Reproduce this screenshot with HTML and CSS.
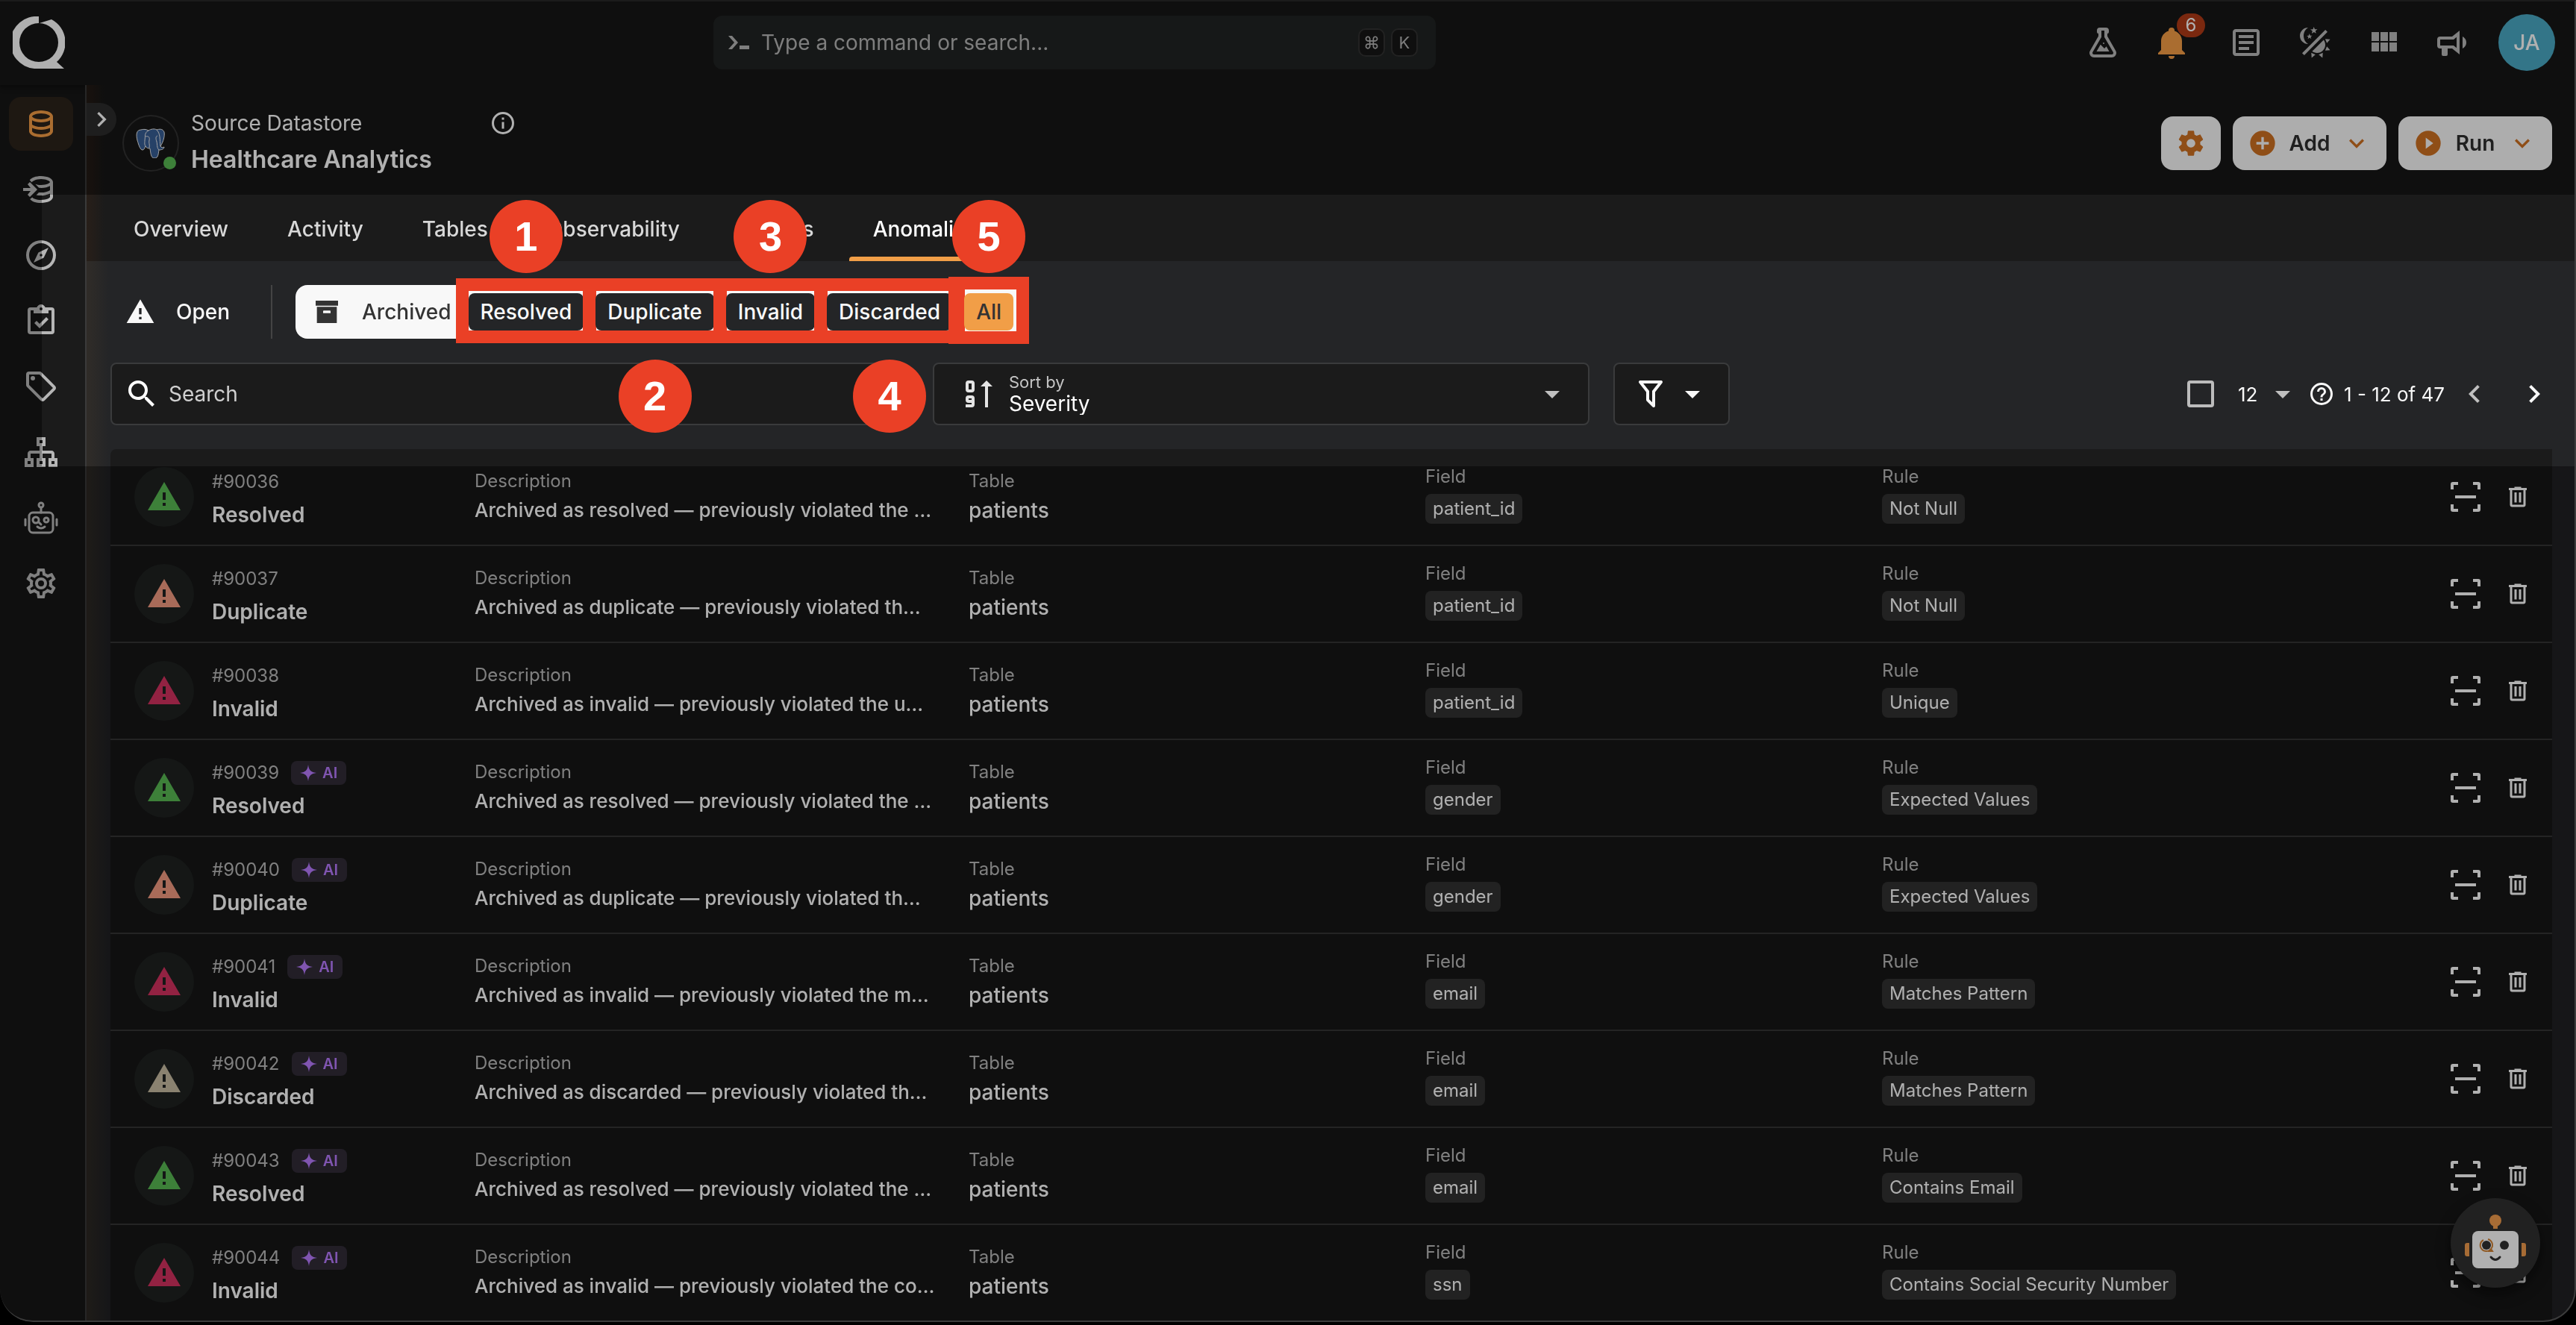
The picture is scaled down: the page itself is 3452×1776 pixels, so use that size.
FILE: index.html
```html
<!DOCTYPE html>
<html lang="en">
<head>
    <meta charset="UTF-8">
    <meta name="viewport" content="width=device-width, initial-scale=1.0">
    <title>Healthcare Analytics - Anomalies</title>
    <link rel="stylesheet" href="styles.css">
</head>
<body>
    <svg class="sprite" aria-hidden="true">
        <symbol id="i-database" viewBox="0 0 24 24"><path d="M12 3C7.58 3 4 4.79 4 7V17C4 19.21 7.59 21 12 21S20 19.21 20 17V7C20 4.79 16.42 3 12 3M18 17C18 17.5 15.87 19 12 19S6 17.5 6 17V14.77C7.61 15.55 9.72 16 12 16S16.39 15.55 18 14.77V17M18 12.45C16.7 13.4 14.42 14 12 14C9.58 14 7.3 13.4 6 12.45V9.64C7.47 10.47 9.61 11 12 11C14.39 11 16.53 10.47 18 9.64V12.45M12 9C8.13 9 6 7.5 6 7S8.13 5 12 5C15.87 5 18 6.5 18 7S15.87 9 12 9Z"/></symbol>
        <symbol id="i-enrich" viewBox="0 0 24 24">
            <path d="M0 11H5L3 8.500L4.500 7L9.500 12L4.500 17L3 15.500L5 13H0Z"/>
            <path d="M12 3C8.500 3 5.500 4.100 4.400 5.700L5.900 7.200C6.100 6.500 8.300 5 12 5C15.870 5 18 6.500 18 7S15.870 9 12 9C10.500 9 9.200 8.800 8.200 8.400L10.600 10.900C13.600 11.200 16.300 10.600 18 9.640V12.450C16.700 13.400 14.420 14 12 14H10.500L8.800 15.700C9.800 15.900 10.900 16 12 16C14.280 16 16.390 15.550 18 14.770V17C18 17.500 15.870 19 12 19C8.700 19 6.600 17.900 6.100 17.200L4.600 18.500C5.800 20 8.600 21 12 21C16.410 21 20 19.210 20 17V7C20 4.790 16.420 3 12 3Z"/>
        </symbol>
        <symbol id="i-compass" viewBox="0 0 24 24"><path d="M7,17L10.2,10.2L17,7L13.8,13.8L7,17M12,11.1A0.9,0.9 0 0,0 11.1,12A0.9,0.9 0 0,0 12,12.9A0.9,0.9 0 0,0 12.9,12A0.9,0.9 0 0,0 12,11.1M12,2A10,10 0 0,1 22,12A10,10 0 0,1 12,22A10,10 0 0,1 2,12A10,10 0 0,1 12,2M12,4A8,8 0 0,0 4,12A8,8 0 0,0 12,20A8,8 0 0,0 20,12A8,8 0 0,0 12,4Z"/></symbol>
        <symbol id="i-clipboard" viewBox="0 0 24 24"><path d="M19,3H14.82C14.4,1.84 13.3,1 12,1C10.7,1 9.6,1.84 9.18,3H5A2,2 0 0,0 3,5V19A2,2 0 0,0 5,21H19A2,2 0 0,0 21,19V5A2,2 0 0,0 19,3M12,3A1,1 0 0,1 13,4A1,1 0 0,1 12,5A1,1 0 0,1 11,4A1,1 0 0,1 12,3M7,7H17V5H19V19H5V5H7V7M7.5,13.5L9,12L11,14L15.5,9.5L17,11L11,17L7.5,13.5Z"/></symbol>
        <symbol id="i-tag" viewBox="0 0 24 24"><path d="M21.41 11.58L12.41 2.58A2 2 0 0 0 11 2H4A2 2 0 0 0 2 4V11A2 2 0 0 0 2.59 12.42L11.59 21.42A2 2 0 0 0 13 22A2 2 0 0 0 14.41 21.41L21.41 14.41A2 2 0 0 0 22 13A2 2 0 0 0 21.41 11.58M13 20L4 11V4H11L20 13M6.5 5A1.5 1.5 0 1 1 5 6.5A1.5 1.5 0 0 1 6.5 5Z"/></symbol>
        <symbol id="i-sitemap" viewBox="0 0 24 24"><path d="M9 2V8H11V11H5C3.89 11 3 11.89 3 13V16H1V22H7V16H5V13H11V16H9V22H15V16H13V13H19V16H17V22H23V16H21V13C21 11.89 20.11 11 19 11H13V8H15V2H9M11 4H13V6H11V4M3 18H5V20H3V18M11 18H13V20H11V18M19 18H21V20H19V18Z"/></symbol>
        <symbol id="i-robot" viewBox="0 0 48 48">
            <g fill="none" stroke="currentColor" stroke-width="3" stroke-linecap="round">
                <rect x="8" y="17" width="32" height="27" rx="5"/>
                <circle cx="24" cy="7" r="3"/>
                <path d="M24 11V17M19 36Q24 40 29 36M21 30L24 33"/>
                <circle cx="17" cy="27" r="4"/>
                <circle cx="31" cy="27" r="3"/>
                <path d="M3 26V34M45 26V34"/>
            </g>
        </symbol>
        <symbol id="i-cog-outline" viewBox="0 0 24 24"><path d="M12,8A4,4 0 0,1 16,12A4,4 0 0,1 12,16A4,4 0 0,1 8,12A4,4 0 0,1 12,8M12,10A2,2 0 0,0 10,12A2,2 0 0,0 12,14A2,2 0 0,0 14,12A2,2 0 0,0 12,10M10,22C9.75,22 9.54,21.82 9.5,21.58L9.13,18.93C8.5,18.68 7.96,18.34 7.44,17.94L4.95,18.95C4.73,19.03 4.46,18.95 4.34,18.73L2.34,15.27C2.21,15.05 2.27,14.78 2.46,14.63L4.57,12.97L4.5,12L4.57,11L2.46,9.37C2.27,9.22 2.21,8.95 2.34,8.73L4.34,5.27C4.46,5.05 4.73,4.96 4.95,5.05L7.44,6.05C7.96,5.66 8.5,5.32 9.13,5.07L9.5,2.42C9.54,2.18 9.75,2 10,2H14C14.25,2 14.46,2.18 14.5,2.42L14.87,5.07C15.5,5.32 16.04,5.66 16.56,6.05L19.05,5.05C19.27,4.96 19.54,5.05 19.66,5.27L21.66,8.73C21.79,8.95 21.73,9.22 21.54,9.37L19.43,11L19.5,12L19.43,13L21.54,14.63C21.73,14.78 21.79,15.05 21.66,15.27L19.66,18.73C19.54,18.95 19.27,19.04 19.05,18.95L16.56,17.95C16.04,18.34 15.5,18.68 14.87,18.93L14.5,21.58C14.46,21.82 14.25,22 14,22H10M11.25,4L10.88,6.61C9.68,6.86 8.62,7.5 7.85,8.39L5.44,7.35L4.69,8.65L6.8,10.2C6.4,11.37 6.4,12.64 6.8,13.8L4.68,15.36L5.43,16.66L7.86,15.62C8.63,16.5 9.68,17.14 10.87,17.38L11.24,20H12.76L13.13,17.39C14.32,17.14 15.37,16.5 16.14,15.62L18.57,16.66L19.32,15.36L17.2,13.81C17.6,12.64 17.6,11.37 17.2,10.2L19.31,8.65L18.56,7.35L16.15,8.39C15.38,7.5 14.32,6.86 13.12,6.62L12.75,4H11.25Z"/></symbol>
        <symbol id="i-cog" viewBox="0 0 24 24"><path d="M12,15.5A3.5,3.5 0 0,1 8.5,12A3.5,3.5 0 0,1 12,8.5A3.5,3.5 0 0,1 15.5,12A3.5,3.5 0 0,1 12,15.5M19.43,12.97C19.47,12.65 19.5,12.33 19.5,12C19.5,11.67 19.47,11.34 19.43,11L21.54,9.37C21.73,9.22 21.78,8.95 21.66,8.73L19.66,5.27C19.54,5.05 19.27,4.96 19.05,5.05L16.56,6.05C16.04,5.66 15.5,5.32 14.87,5.07L14.5,2.42C14.46,2.18 14.25,2 14,2H10C9.75,2 9.54,2.18 9.5,2.42L9.13,5.07C8.5,5.32 7.96,5.66 7.44,6.05L4.95,5.05C4.73,4.96 4.46,5.05 4.34,5.27L2.34,8.73C2.21,8.95 2.27,9.22 2.46,9.37L4.57,11C4.53,11.34 4.5,11.67 4.5,12C4.5,12.33 4.53,12.65 4.57,12.97L2.46,14.63C2.27,14.78 2.21,15.05 2.34,15.27L4.34,18.73C4.46,18.95 4.73,19.03 4.95,18.95L7.44,17.94C7.96,18.34 8.5,18.68 9.13,18.93L9.5,21.58C9.54,21.82 9.75,22 10,22H14C14.25,22 14.46,21.82 14.5,21.58L14.87,18.93C15.5,18.67 16.04,18.34 16.56,17.94L19.05,18.95C19.27,19.03 19.54,18.95 19.66,18.73L21.66,15.27C21.78,15.05 21.73,14.78 21.54,14.63L19.43,12.97Z"/></symbol>
        <symbol id="i-flask" viewBox="0 0 24 24"><path d="M5,19A1,1 0 0,0 6,20H18A1,1 0 0,0 19,19C19,18.79 18.93,18.59 18.82,18.43L13,8.35V4H11V8.35L5.18,18.43C5.07,18.59 5,18.79 5,19M6,22A3,3 0 0,1 3,19C3,18.4 3.18,17.84 3.5,17.37L9,7.81V6A1,1 0 0,1 8,5V4A2,2 0 0,1 10,2H14A2,2 0 0,1 16,4V5A1,1 0 0,1 15,6V7.81L20.5,17.37C20.82,17.84 21,18.4 21,19A3,3 0 0,1 18,22H6M13,16L14.34,14.66L16.27,18H7.73L10.39,13.39L13,16M12.5,12A0.5,0.5 0 0,1 13,12.5A0.5,0.5 0 0,1 12.5,13A0.5,0.5 0 0,1 12,12.5A0.5,0.5 0 0,1 12.5,12Z"/></symbol>
        <symbol id="i-bell" viewBox="0 0 24 24"><path d="M21,19V20H3V19L5,17V11C5,7.9 7.03,5.17 10,4.29C10,4.19 10,4.1 10,4A2,2 0 0,1 12,2A2,2 0 0,1 14,4C14,4.1 14,4.19 14,4.29C16.97,5.17 19,7.9 19,11V17L21,19M14,21A2,2 0 0,1 12,23A2,2 0 0,1 10,21"/></symbol>
        <symbol id="i-text-box" viewBox="0 0 24 24"><path d="M5,3C3.89,3 3,3.89 3,5V19C3,20.11 3.89,21 5,21H19C20.11,21 21,20.11 21,19V5C21,3.89 20.11,3 19,3H5M5,5H19V19H5V5M7,7V9H17V7H7M7,11V13H17V11H7M7,15V17H14V15H7Z"/></symbol>
        <symbol id="i-theme" viewBox="0 0 24 24"><path d="M7.5,2C5.71,3.15 4.5,5.18 4.5,7.5C4.5,9.82 5.71,11.85 7.53,13C4.46,13 2,10.54 2,7.5A5.5,5.5 0 0,1 7.5,2M19.07,3.5L20.5,4.93L4.93,20.5L3.5,19.07L19.07,3.5M12.89,5.93L11.41,5L9.97,6L10.39,4.3L9,3.24L10.75,3.12L11.33,1.47L12,3.1L13.73,3.13L12.38,4.26L12.89,5.93M9.59,9.54L8.43,8.81L7.31,9.59L7.65,8.27L6.56,7.44L7.92,7.35L8.37,6.06L8.88,7.33L10.24,7.36L9.19,8.23L9.59,9.54M19,13.5A5.5,5.5 0 0,1 13.5,19C12.28,19 11.15,18.6 10.24,17.93L17.93,10.24C18.6,11.15 19,12.28 19,13.5M14.6,20.08L17.37,18.93L17.13,22.28L14.6,20.08M18.93,17.38L20.08,14.61L22.28,17.15L18.93,17.38M20.08,12.42L18.94,9.64L22.28,9.88L20.08,12.42M9.63,18.93L12.4,20.08L9.87,22.27L9.63,18.93Z"/></symbol>
        <symbol id="i-grid" viewBox="0 0 24 24"><path d="M16,5V11H21V5M10,11H15V5H10M16,18H21V12H16M10,18H15V12H10M4,18H9V12H4M4,11H9V5H4V11Z"/></symbol>
        <symbol id="i-bullhorn" viewBox="0 0 24 24"><path d="M12,8H4A2,2 0 0,0 2,10V14A2,2 0 0,0 4,16H5V20A1,1 0 0,0 6,21H8A1,1 0 0,0 9,20V16H12L17,20V4L12,8M15,15.6L13,14H4V10H13L15,8.4V15.6M21.5,12C21.5,13.71 20.54,15.26 19,16V8C20.53,8.75 21.5,10.3 21.5,12Z"/></symbol>
        <symbol id="i-alert" viewBox="0 0 24 24"><path d="M13 14H11V9H13M13 18H11V16H13M1 21H23L12 2L1 21Z"/></symbol>
        <symbol id="i-archive" viewBox="0 0 24 24"><path d="M3 3H21V7H3V3M4 8H20V21H4V8M9.5 11A.5.5 0 0 0 9 11.5V13H15V11.5A.5.5 0 0 0 14.5 11H9.5Z"/></symbol>
        <symbol id="i-search" viewBox="0 0 24 24"><path d="M9.5,3A6.5,6.5 0 0,1 16,9.5C16,11.11 15.41,12.59 14.44,13.73L14.71,14H15.5L20.5,19L19,20.5L14,15.5V14.71L13.73,14.44C12.59,15.41 11.11,16 9.5,16A6.5,6.5 0 0,1 3,9.5A6.5,6.5 0 0,1 9.5,3M9.5,5C7,5 5,7 5,9.5C5,12 7,14 9.5,14C12,14 14,12 14,9.5C14,7 12,5 9.5,5Z"/></symbol>
        <symbol id="i-filter" viewBox="0 0 24 24"><path d="M15,19.88C15.04,20.18 14.94,20.5 14.71,20.71C14.32,21.1 13.69,21.1 13.3,20.71L9.29,16.7C9.06,16.47 8.96,16.16 9,15.87V10.75L4.21,4.62C3.87,4.19 3.95,3.56 4.38,3.22C4.57,3.08 4.78,3 5,3V3H19V3C19.22,3 19.43,3.08 19.62,3.22C20.05,3.56 20.13,4.19 19.79,4.62L15,10.75V19.88M7.04,5L11,10.06V15.58L13,17.58V10.05L16.96,5H7.04Z"/></symbol>
        <symbol id="i-sort" viewBox="0 0 24 24">
            <path d="M18 21V7H15L19 3L23 7H20V21Z"/>
            <g fill="none" stroke="currentColor" stroke-width="2">
                <rect x="6" y="4" width="4" height="6" rx="1"/>
                <path d="M10 17H7A1 1 0 0 1 6 16V15A1 1 0 0 1 7 14H9A1 1 0 0 1 10 15V19A1 1 0 0 1 9 20H5"/>
            </g>
        </symbol>
        <symbol id="i-help" viewBox="0 0 24 24"><path d="M11,18H13V16H11V18M12,2A10,10 0 0,0 2,12A10,10 0 0,0 12,22A10,10 0 0,0 22,12A10,10 0 0,0 12,2M12,20C7.59,20 4,16.41 4,12C4,7.59 7.59,4 12,4C16.41,4 20,7.59 20,12C20,16.41 16.41,20 12,20M12,6A4,4 0 0,0 8,10H10A2,2 0 0,1 12,8A2,2 0 0,1 14,10C14,12 11,11.75 11,15H13C13,12.75 16,12.5 16,10A4,4 0 0,0 12,6Z"/></symbol>
        <symbol id="i-info" viewBox="0 0 24 24"><path d="M11,9H13V7H11M12,20C7.59,20 4,16.41 4,12C4,7.59 7.59,4 12,4C16.41,4 20,7.59 20,12C20,16.41 16.41,20 12,20M12,2A10,10 0 0,0 2,12A10,10 0 0,0 12,22A10,10 0 0,0 22,12A10,10 0 0,0 12,2M11,17H13V11H11V17Z"/></symbol>
        <symbol id="i-trash" viewBox="0 0 24 24"><path d="M9,3V4H4V6H5V19A2,2 0 0,0 7,21H17A2,2 0 0,0 19,19V6H20V4H15V3H9M7,6H17V19H7V6M9,8V17H11V8H9M13,8V17H15V8H13Z"/></symbol>
        <symbol id="i-scan" viewBox="0 0 40 40"><path d="M0 10V3A3 3 0 0 1 3 0H10V4H4V10ZM30 0H37A3 3 0 0 1 40 3V10H36V4H30ZM40 30V37A3 3 0 0 1 37 40H30V36H36V30ZM10 40H3A3 3 0 0 1 0 37V30H4V36H10ZM6 18H34V22H6Z"/></symbol>
        <symbol id="i-plus" viewBox="0 0 24 24"><path d="M17,13H13V17H11V13H7V11H11V7H13V11H17M12,2A10,10 0 0,0 2,12A10,10 0 0,0 12,22A10,10 0 0,0 22,12A10,10 0 0,0 12,2Z"/></symbol>
        <symbol id="i-play" viewBox="0 0 24 24"><path d="M10,16.5V7.5L16,12M12,2A10,10 0 0,0 2,12A10,10 0 0,0 12,22A10,10 0 0,0 22,12A10,10 0 0,0 12,2Z"/></symbol>
        <symbol id="i-chevron-down" viewBox="0 0 24 24"><path d="M7.41,8.58L12,13.17L16.59,8.58L18,10L12,16L6,10L7.41,8.58Z"/></symbol>
        <symbol id="i-chevron-right" viewBox="0 0 24 24"><path d="M8.59,16.58L13.17,12L8.59,7.41L10,6L16,12L10,18L8.59,16.58Z"/></symbol>
        <symbol id="i-chevron-left" viewBox="0 0 24 24"><path d="M15.41,16.58L10.83,12L15.41,7.41L14,6L8,12L14,18L15.41,16.58Z"/></symbol>
        <symbol id="i-caret" viewBox="0 0 24 24"><path d="M7,10L12,15L17,10H7Z"/></symbol>
        <symbol id="i-prompt" viewBox="0 0 28 20"><path d="M0 1H5L13 10L5 19H0L8 10ZM15 14H28V19H15Z"/></symbol>
        <symbol id="i-spark" viewBox="0 0 24 24"><path d="M12 0C13 8 16 11 24 12C16 13 13 16 12 24C11 16 8 13 0 12C8 11 11 8 12 0Z"/></symbol>
    </svg>

    <div class="app">
        <header class="topbar">
            <a class="logo" href="#" aria-label="Home">
                <svg viewBox="0 0 70 70"><path fill-rule="evenodd" d="M35 0A35 35 0 0 0 29 70H69L59 61A35 35 0 0 0 52 4L36 9L35 9ZM35 9A26 26 0 0 1 35 61A26 26 0 0 1 35 9Z"/></svg>
            </a>
            <div class="command">
                <svg class="prompt"><use href="#i-prompt"/></svg>
                <input type="text" aria-label="Command" placeholder="Type a command or search...">
                <kbd>⌘</kbd>
                <kbd>K</kbd>
            </div>
            <nav class="top-actions" aria-label="Account">
                <button aria-label="Labs"><svg class="icon"><use href="#i-flask"/></svg></button>
                <button class="alerts" aria-label="Notifications"><svg class="icon"><use href="#i-bell"/></svg><span class="count">6</span></button>
                <button aria-label="Docs"><svg class="icon"><use href="#i-text-box"/></svg></button>
                <button aria-label="Theme"><svg class="icon"><use href="#i-theme"/></svg></button>
                <button aria-label="Apps"><svg class="icon"><use href="#i-grid"/></svg></button>
                <button aria-label="News"><svg class="icon"><use href="#i-bullhorn"/></svg></button>
            </nav>
            <button class="avatar">JA</button>
        </header>

        <div class="body">
            <nav class="sidebar" aria-label="Main">
                <a class="active" href="#" aria-label="Datastores"><svg class="icon"><use href="#i-database"/></svg></a>
                <a href="#" aria-label="Enrichment"><svg class="icon"><use href="#i-enrich"/></svg></a>
                <a href="#" aria-label="Explore"><svg class="icon"><use href="#i-compass"/></svg></a>
                <a href="#" aria-label="Checks"><svg class="icon"><use href="#i-clipboard"/></svg></a>
                <a href="#" aria-label="Tags"><svg class="icon"><use href="#i-tag"/></svg></a>
                <a href="#" aria-label="Flows"><svg class="icon"><use href="#i-sitemap"/></svg></a>
                <a href="#" aria-label="Assistant"><svg class="icon"><use href="#i-robot"/></svg></a>
                <a href="#" aria-label="Settings"><svg class="icon"><use href="#i-cog-outline"/></svg></a>
            </nav>

            <main class="main">
                <button class="expand" aria-label="Expand tree"><svg class="icon small"><use href="#i-chevron-right"/></svg></button>

                <section class="store">
                    <div class="store-icon">
                        <svg viewBox="0 0 40 40">
                            <path fill="#3b5f94" stroke="#e8e8e8" stroke-width="1" d="M7 2C1 2 0 8 2 16C4 23 6 29 9 29C11 29 12 26 13 24C14 26 16 27 19 27C20 33 20 40 25 40C30 40 30 35 31 29C34 29 38 28 38 25C36 26 34 26 33 24C37 18 39 10 38 5C36 0 31 1 28 2C25 0 20 1 17 3C14 1 10 1 7 2Z"/>
                            <path fill="none" stroke="#e8e8e8" stroke-width="1" d="M17 3C11 6 13 11 12 16C12 20 11 22 14 25M28 2C33 7 32 15 33 24M13 11C17 10 19 12 18 16C17 19 19 22 18 26M29 10C26 11 27 15 28 18C29 22 28 26 31 29"/>
                        </svg>
                        <span class="online"></span>
                    </div>
                    <div class="store-text">
                        <div class="store-kind">Source Datastore <svg class="icon mini"><use href="#i-info"/></svg></div>
                        <h1>Healthcare Analytics</h1>
                    </div>
                    <div class="store-actions">
                        <button class="btn" aria-label="Settings"><svg class="icon small"><use href="#i-cog"/></svg></button>
                        <button class="btn wide"><svg class="icon small"><use href="#i-plus"/></svg>Add<svg class="icon small"><use href="#i-chevron-down"/></svg></button>
                        <button class="btn wide"><svg class="icon small"><use href="#i-play"/></svg>Run<svg class="icon small"><use href="#i-chevron-down"/></svg></button>
                    </div>
                </section>

                <nav class="tabs" aria-label="Datastore">
                    <a href="#">Overview</a>
                    <a href="#">Activity</a>
                    <a href="#">Tables</a>
                    <a href="#">Observability</a>
                    <a href="#">Checks</a>
                    <a class="active" href="#">Anomalies</a>
                </nav>

                <section class="content">
                    <div class="status-bar">
                        <button class="open"><svg class="icon small"><use href="#i-alert"/></svg>Open</button>
                        <div class="archived">
                            <svg class="icon small"><use href="#i-archive"/></svg>
                            <span class="archived-label">Archived</span>
                            <div class="step"><button class="chip">Resolved</button><span class="num">1</span></div>
                            <div class="step"><button class="chip">Duplicate</button><span class="num below">2</span></div>
                            <div class="step"><button class="chip">Invalid</button><span class="num">3</span></div>
                            <div class="step"><button class="chip">Discarded</button><span class="num below">4</span></div>
                            <div class="step last"><button class="chip selected">All</button><span class="num">5</span></div>
                        </div>
                    </div>

                    <div class="filters">
                        <div class="box search">
                            <svg class="icon"><use href="#i-search"/></svg>
                            <input type="text" aria-label="Search anomalies" placeholder="Search">
                        </div>
                        <div class="box sort">
                            <svg class="icon"><use href="#i-sort"/></svg>
                            <div class="sort-field">
                                <label for="sortBy">Sort by</label>
                                <select id="sortBy">
                                    <option>Severity</option>
                                    <option>Created</option>
                                </select>
                            </div>
                            <svg class="icon caret"><use href="#i-caret"/></svg>
                        </div>
                        <button class="box filter" aria-label="Filter"><svg class="icon"><use href="#i-filter"/></svg><svg class="icon"><use href="#i-caret"/></svg></button>
                        <div class="pager">
                            <input type="checkbox" aria-label="Select all">
                            <select aria-label="Rows per page">
                                <option>12</option>
                                <option>24</option>
                            </select>
                            <svg class="icon caret"><use href="#i-caret"/></svg>
                            <svg class="icon mini"><use href="#i-help"/></svg>
                            <span class="range">1 - 12 of 47</span>
                            <button class="prev" aria-label="Previous page"><svg class="icon"><use href="#i-chevron-left"/></svg></button>
                            <button aria-label="Next page"><svg class="icon"><use href="#i-chevron-right"/></svg></button>
                        </div>
                    </div>

                    <table class="anomalies">
                        <colgroup>
                            <col class="c-id">
                            <col class="c-desc">
                            <col class="c-attr">
                            <col class="c-attr">
                            <col class="c-attr">
                            <col>
                        </colgroup>
                        <tbody id="anomalyList"></tbody>
                    </table>
                </section>
            </main>
        </div>

        <button class="assistant" aria-label="Open assistant">
            <svg viewBox="0 0 84 74">
                <g fill="#ec9a4f">
                    <circle cx="42" cy="9" r="8"/>
                    <path d="M39 14H45V20H39Z"/>
                    <path d="M7 39H4A3 3 0 0 0 1 42V54A3 3 0 0 0 4 57H7ZM77 39H80A3 3 0 0 1 83 42V54A3 3 0 0 1 80 57H77Z"/>
                </g>
                <rect x="11" y="23" width="62" height="50" rx="8" fill="#fafafa"/>
                <path fill="none" stroke="#cb7f36" stroke-width="2" d="M26 35A8 8 0 1 0 36 47L38 50H32M32 34A8 8 0 0 1 36 47"/>
                <circle cx="30" cy="42" r="6" fill="#343434"/>
                <circle cx="54" cy="42" r="6" fill="#343434"/>
                <path fill="none" stroke="#343434" stroke-width="3" stroke-linecap="round" d="M36 58Q42 65 48 58"/>
            </svg>
        </button>

        <div class="dim dim-top"></div>
        <div class="dim dim-left"></div>
        <div class="dim dim-bottom"></div>
    </div>

    <script>
        const anomalies = [
            { id: 90036, status: 'Resolved', desc: 'Archived as resolved — previously violated the …', field: 'patient_id', rule: 'Not Null' },
            { id: 90037, status: 'Duplicate', desc: 'Archived as duplicate — previously violated th…', field: 'patient_id', rule: 'Not Null' },
            { id: 90038, status: 'Invalid', desc: 'Archived as invalid — previously violated the u…', field: 'patient_id', rule: 'Unique' },
            { id: 90039, status: 'Resolved', ai: true, desc: 'Archived as resolved — previously violated the …', field: 'gender', rule: 'Expected Values' },
            { id: 90040, status: 'Duplicate', ai: true, desc: 'Archived as duplicate — previously violated th…', field: 'gender', rule: 'Expected Values' },
            { id: 90041, status: 'Invalid', ai: true, desc: 'Archived as invalid — previously violated the m…', field: 'email', rule: 'Matches Pattern' },
            { id: 90042, status: 'Discarded', ai: true, desc: 'Archived as discarded — previously violated th…', field: 'email', rule: 'Matches Pattern' },
            { id: 90043, status: 'Resolved', ai: true, desc: 'Archived as resolved — previously violated the …', field: 'email', rule: 'Contains Email' },
            { id: 90044, status: 'Invalid', ai: true, desc: 'Archived as invalid — previously violated the co…', field: 'ssn', rule: 'Contains Social Security Number' }
        ];

        function renderAnomalies(items) {
            const list = document.getElementById('anomalyList');
            items.forEach(item => {
                const tr = document.createElement('tr');
                tr.innerHTML = `
                    <td>
                        <div class="identity">
                            <span class="state ${item.status.toLowerCase()}"><svg class="icon"><use href="#i-alert"/></svg></span>
                            <div class="identity-text">
                                <div class="label">#${item.id}${item.ai ? '<span class="ai"><svg><use href="#i-spark"/></svg>AI</span>' : ''}</div>
                                <div class="status">${item.status}</div>
                            </div>
                        </div>
                    </td>
                    <td class="text"><div class="label">Description</div><div class="value long">${item.desc}</div></td>
                    <td class="text"><div class="label">Table</div><div class="value">patients</div></td>
                    <td class="attr"><div class="label">Field</div><span class="pill">${item.field}</span></td>
                    <td class="attr"><div class="label">Rule</div><span class="pill">${item.rule}</span></td>
                    <td>
                        <div class="row-actions">
                            <button aria-label="Inspect #${item.id}"><svg class="icon small"><use href="#i-scan"/></svg></button>
                            <button aria-label="Delete #${item.id}"><svg class="icon mini"><use href="#i-trash"/></svg></button>
                        </div>
                    </td>
                `;
                list.appendChild(tr);
            });
        }

        renderAnomalies(anomalies);
    </script>
</body>
</html>
```

FILE: styles.css
```css
* {
    box-sizing: border-box;
}
body {
    margin: 0;
    background-color: #000;
    color: #f8f8f8;
    font-family: Inter, 'Noto Sans', sans-serif;
    font-size: 28px;
}
button, input, select {
    margin: 0;
    padding: 0;
    border: none;
    background: none;
    color: inherit;
    font: inherit;
}
button {
    cursor: pointer;
}
a {
    color: inherit;
    text-decoration: none;
}
svg {
    display: block;
    flex: none;
    fill: currentColor;
}
.sprite {
    position: absolute;
    width: 0;
    height: 0;
}
.icon {
    width: 48px;
    height: 48px;
}
.icon.small {
    width: 40px;
    height: 40px;
}
.icon.mini {
    width: 36px;
    height: 36px;
}
.app {
    position: relative;
    overflow: hidden;
    background-color: #1b1b1b;
    border-radius: 0 0 44px 44px;
}
.app::after {
    content: '';
    position: absolute;
    inset: 0;
    border: 2px solid #3c3c3c;
    border-top-color: #1b1b1b;
    border-left-width: 0;
    border-radius: 0 0 44px 44px;
    pointer-events: none;
}
/* everything outside the highlighted panel is darkened */
.dim {
    position: absolute;
    left: 0;
    right: 0;
    pointer-events: none;
    backdrop-filter: contrast(1.053) brightness(0.692);
}
.dim-top {
    top: 0;
    height: 261px;
}
.dim-left {
    top: 261px;
    right: auto;
    width: 56px;
    height: 364px;
}
.dim-bottom {
    top: 625px;
    bottom: 0;
}

/* top bar */
.topbar {
    display: flex;
    align-items: center;
    height: 114px;
    padding: 0 28px 0 17px;
    box-shadow: 0 2px 8px rgba(0, 0, 0, 0.4);
}
.logo svg {
    width: 70px;
    height: 70px;
}
.command {
    display: flex;
    align-items: center;
    flex: 0 1 968px;
    height: 72px;
    margin-left: 869px;
    padding: 0 24px 0 20px;
    gap: 8px;
    background-color: #252827;
    border-radius: 12px;
    color: #b4b4b4;
}
.prompt {
    width: 28px;
    height: 20px;
    margin-right: 8px;
}
.command input {
    flex: 1;
    min-width: 0;
    height: 48px;
}
input::placeholder {
    color: inherit;
    opacity: 1;
}
kbd {
    width: 36px;
    height: 38px;
    background-color: #1b1b1b;
    border: 2px solid #353535;
    border-radius: 10px;
    font-family: Inter, 'DejaVu Sans', sans-serif;
    font-size: 22px;
    line-height: 34px;
    text-align: center;
}
.top-actions {
    display: flex;
    gap: 44px;
    margin-left: auto;
    color: #b6b6b6;
}
.alerts {
    position: relative;
    width: 56px;
    color: #f09c48;
}
.count {
    position: absolute;
    top: -15px;
    left: 31px;
    width: 38px;
    height: 32px;
    background-color: #ae3d1b;
    border-radius: 16px;
    color: #f8f8f8;
    font-size: 24px;
    line-height: 32px;
}
.avatar {
    width: 76px;
    height: 76px;
    margin-left: 38px;
    background-color: #4ca7c1;
    border-radius: 50%;
    font-weight: 500;
}

/* side navigation */
.body {
    display: flex;
}
.sidebar {
    display: flex;
    flex-direction: column;
    flex: none;
    gap: 16px;
    width: 116px;
    padding: 16px 0 0 12px;
    border-right: 2px solid #3a3a3a;
    color: #b6b6b6;
}
.sidebar a {
    display: flex;
    align-items: center;
    justify-content: center;
    width: 86px;
    height: 72px;
    border-radius: 16px;
}
.sidebar .active {
    background-color: #30271f;
    color: #f09c48;
}

/* datastore heading */
.main {
    position: relative;
    flex: 1;
    min-width: 0;
    background: linear-gradient(90deg, #281f19, #1b1b1b 24px);
}
.expand {
    position: absolute;
    top: 24px;
    left: 0;
    width: 40px;
    height: 44px;
    background-color: #303030;
    border-radius: 0 22px 22px 0;
}
.store {
    display: flex;
    align-items: center;
    height: 147px;
    padding: 8px 32px 0 48px;
}
.store-icon {
    position: relative;
    display: flex;
    align-items: center;
    justify-content: center;
    width: 76px;
    height: 76px;
    border: 2px solid #353535;
    border-radius: 50%;
}
.store-icon svg {
    width: 40px;
    height: 40px;
}
.online {
    position: absolute;
    right: 2px;
    bottom: 1px;
    width: 17px;
    height: 17px;
    background-color: #5ab655;
    border-radius: 50%;
}
.store-text {
    width: 452px;
    padding: 0 0 6px 16px;
}
.store-kind {
    display: flex;
    align-items: center;
    justify-content: space-between;
    height: 50px;
}
h1 {
    margin: 0;
    font-size: 32px;
    font-weight: 600;
    line-height: 48px;
}
.store-actions {
    display: flex;
    gap: 16px;
    margin-left: auto;
}
.btn {
    display: flex;
    align-items: center;
    justify-content: center;
    width: 80px;
    height: 72px;
    background-color: #f4f4f4;
    border-radius: 16px;
    color: #333;
    font-weight: 600;
}
.btn.wide {
    justify-content: space-between;
    width: 206px;
    padding: 0 20px;
}
.btn svg {
    color: #cb7126;
}

/* tabs */
.tabs {
    display: flex;
    gap: 15px;
    height: 89px;
    padding-left: 31px;
    color: #d8d8d8;
    font-weight: 500;
    line-height: 92px;
}
.tabs a {
    padding: 0 32px;
}
.tabs .active {
    position: relative;
    color: #fff;
}
.tabs .active::after {
    content: '';
    position: absolute;
    right: 0;
    bottom: 0;
    left: 0;
    height: 6px;
    background-color: #f19e47;
    border-radius: 4px 4px 0 0;
}

/* status filter */
.content {
    display: flex;
    flex-direction: column;
    gap: 32px;
    padding: 32px 32px 0;
    background: linear-gradient(90deg, #302c28, #242527 30px);
}
.status-bar {
    position: relative;
    z-index: 1;
    display: flex;
    font-weight: 500;
}
.open {
    display: flex;
    align-items: center;
    gap: 28px;
    width: 217px;
    height: 72px;
    padding-left: 20px;
    border-right: 2px solid #444;
}
.archived {
    display: flex;
    align-items: center;
    height: 72px;
    margin-left: 31px;
    padding: 0 10px 0 22px;
    gap: 16px;
    background-color: #f8f8f8;
    border-radius: 16px;
    color: #333;
}
.archived-label {
    margin: 0 7px 0 11px;
}
.step {
    position: relative;
}
.step::after {
    content: '';
    position: absolute;
    inset: -20px -17px -17px;
    border: 17px solid #ea4026;
    pointer-events: none;
}
.last::after {
    inset: -22px -21px -18px;
}
.chip {
    display: block;
    height: 50px;
    padding: 0 16px;
    background-color: #242527;
    border-radius: 8px;
    color: #fafafa;
}
.chip.selected {
    background-color: #f19e47;
    color: #333;
}
.num {
    position: absolute;
    top: -125px;
    left: 50%;
    width: 98px;
    height: 98px;
    margin-left: -49px;
    background-color: #ea4026;
    border-radius: 50%;
    color: #fff;
    font-family: 'Liberation Sans', Arial, sans-serif;
    font-size: 56px;
    font-weight: 700;
    line-height: 98px;
    text-align: center;
}
.num.below {
    top: 89px;
}

/* search, sort and paging */
.filters {
    display: flex;
    align-items: center;
    gap: 32px;
}
.box {
    display: flex;
    align-items: center;
    height: 84px;
    background-color: #1b1b1b;
    border: 2px solid #3a3b3c;
    border-radius: 8px;
}
.search {
    width: 32.7%;
    padding: 0 16px;
    gap: 12px;
}
.search input {
    flex: 1;
    min-width: 0;
    height: 48px;
    color: #cfcfcf;
}
.search svg {
    color: #fff;
}
.sort {
    width: 26.9%;
    padding: 0 24px 0 32px;
    color: #e4e4e4;
}
.sort-field {
    flex: 1;
    padding-left: 20px;
}
.sort-field label {
    display: block;
    color: #c4c4c4;
    font-size: 22px;
    line-height: 24px;
}
select {
    appearance: none;
    height: 32px;
}
.sort-field select {
    display: block;
    width: 100%;
    color: #fff;
}
.caret {
    color: #c0c0c0;
}
.filter {
    justify-content: center;
    gap: 8px;
    width: 156px;
}
.pager {
    display: flex;
    align-items: center;
    margin-left: auto;
    white-space: nowrap;
}
.pager input {
    appearance: none;
    width: 36px;
    height: 36px;
    margin-right: 32px;
    border: 4px solid #bcbcbc;
    border-radius: 4px;
}
.pager select {
    width: 36px;
    font-size: 26px;
}
.pager .mini {
    margin: 0 12px 0 10px;
}
.range {
    margin-right: 16px;
    font-size: 26px;
}
.prev {
    margin-right: 32px;
    color: #c0c0c0;
}

/* anomaly list */
.anomalies {
    width: 100%;
    table-layout: fixed;
    border-collapse: separate;
    border-spacing: 0;
    background-color: #1b1b1b;
    border-radius: 8px 0 0 0;
}
.c-id {
    width: 488px;
}
.c-desc {
    width: 662px;
}
.c-attr {
    width: 612px;
}
td {
    height: 130px;
    padding: 0;
    border-bottom: 2px solid #383838;
    white-space: nowrap;
}
td.text {
    padding-bottom: 4px;
}
td.attr {
    padding-top: 18px;
    vertical-align: top;
}
.identity {
    display: flex;
    align-items: center;
    gap: 24px;
    padding-left: 32px;
}
.identity-text {
    padding-top: 3px;
}
.state {
    display: flex;
    align-items: center;
    justify-content: center;
    width: 80px;
    height: 80px;
    background-color: #232625;
    border-radius: 50%;
}
.state.resolved {
    color: #5ab655;
}
.state.duplicate {
    color: #ed9981;
}
.state.invalid {
    color: #cf3561;
}
.state.discarded {
    color: #c4b9a0;
}
.label {
    display: flex;
    align-items: center;
    gap: 16px;
    height: 36px;
    color: #b6b6b6;
    font-size: 24px;
}
.status {
    margin-top: 8px;
    font-weight: 600;
    line-height: 36px;
}
.value {
    margin-top: 4px;
    font-weight: 500;
    line-height: 36px;
}
.value.long {
    font-size: 26px;
}
.ai {
    display: flex;
    align-items: center;
    gap: 8px;
    height: 32px;
    padding: 0 12px;
    background-color: #35303b;
    border-radius: 8px;
    color: #b67bff;
    font-size: 20px;
    font-weight: 600;
}
.ai svg {
    width: 22px;
    height: 22px;
}
.pill {
    display: inline-block;
    height: 40px;
    margin-top: 6px;
    padding: 0 10px;
    background-color: #353535;
    border-radius: 8px;
    font-size: 24px;
    line-height: 40px;
}
.row-actions {
    display: flex;
    align-items: center;
    justify-content: flex-end;
    gap: 32px;
    padding-right: 28px;
}

.assistant {
    position: absolute;
    right: 48px;
    bottom: 46px;
    width: 120px;
    height: 120px;
    padding: 0 18px 4px;
    background-color: #343434;
    border-radius: 50%;
    box-shadow: 0 8px 20px rgba(0, 0, 0, 0.4);
}
```
